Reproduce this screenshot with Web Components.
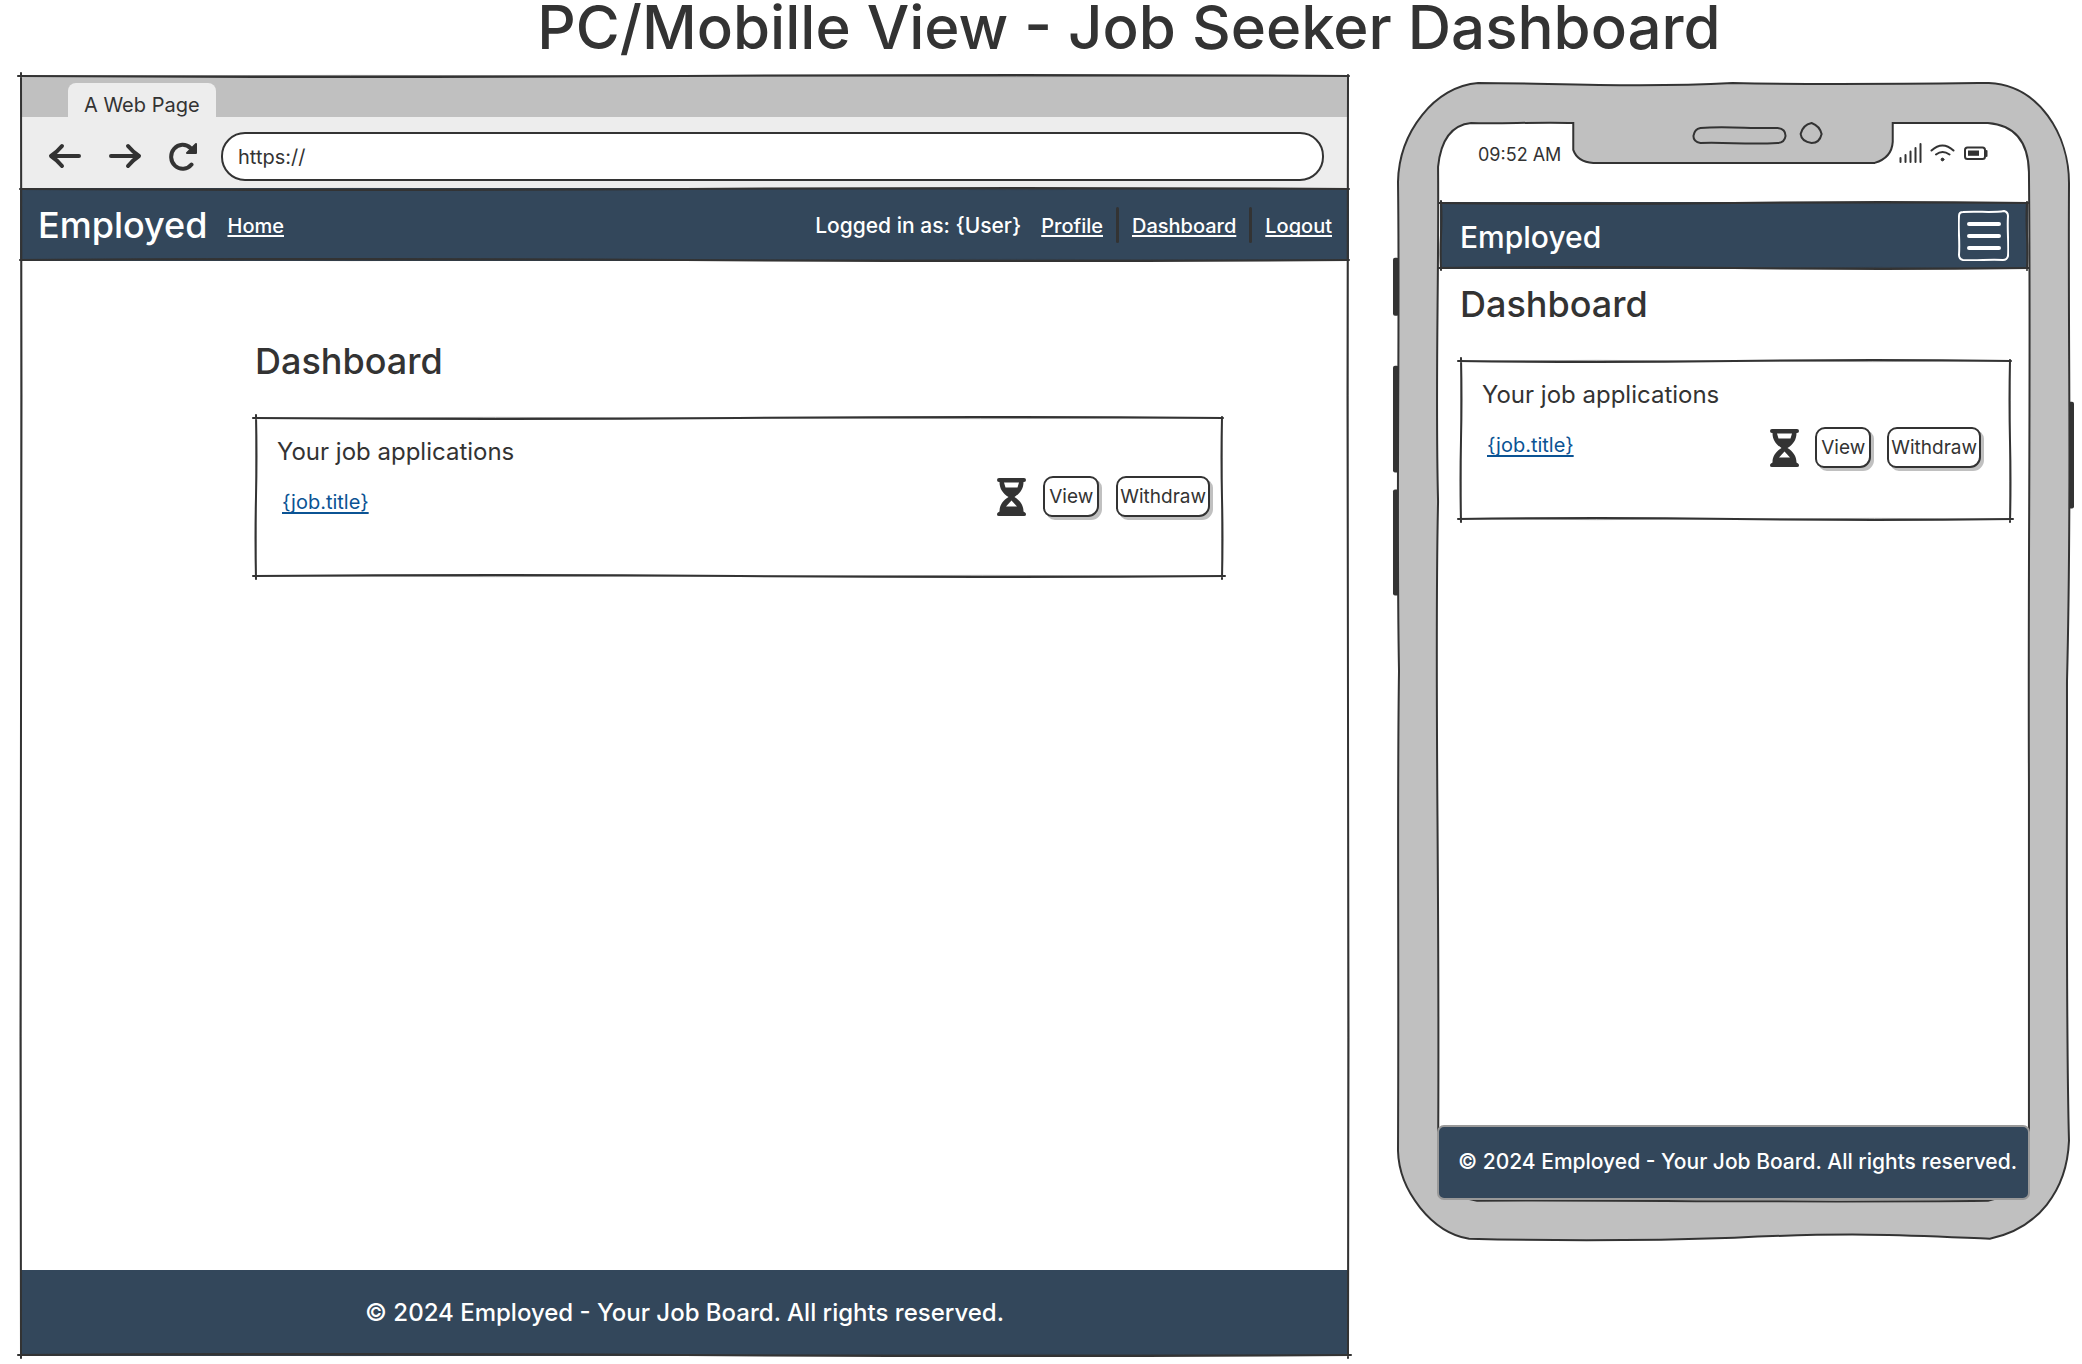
<!DOCTYPE html>
<html lang="en">
<head>
<meta charset="utf-8">
<meta name="viewport" content="width=device-width, initial-scale=1">
<title>PC/Mobille View - Job Seeker Dashboard</title>
<style>
  body {
    margin: 0;
    background: #fff;
    color: #333;
    font-family: Inter, "Open Sans", sans-serif;
    --ink: #333;
    --navy: #33475b;
    --metal: #c0c0c0;
    --link: #0b5394;
  }
</style>
</head>
<body>
<wireframe-board></wireframe-board>

<script>
function define(name, html, Base = HTMLElement) {
  const template = document.createElement('template');
  template.innerHTML = html;
  customElements.define(name, class extends Base {
    constructor() {
      super();
      this.attachShadow({ mode: 'open' }).append(template.content.cloneNode(true));
    }
  });
}

/* Hand-drawn outline laid over its parent; sides="trbl" picks the edges. */
class SketchOutline extends HTMLElement {
  constructor() {
    super();
    this.attachShadow({ mode: 'open' }).innerHTML = `
      <style>
        :host { position: absolute; inset: 0; display: block; pointer-events: none; color: var(--ink); }
        svg { display: block; width: 100%; height: 100%; overflow: visible; }
        path { fill: none; stroke: currentColor; stroke-width: 2; stroke-linecap: round; }
        path.ghost { stroke-width: 1; opacity: .5; }
      </style>
      <svg aria-hidden="true"><path class="ghost"/><path class="main"/></svg>`;
  }
  connectedCallback() {
    this.observer = new ResizeObserver(() => this.draw());
    this.observer.observe(this);
    this.draw();
  }
  disconnectedCallback() { this.observer.disconnect(); }
  draw() {
    const w = this.clientWidth, h = this.clientHeight;
    const sides = this.getAttribute('sides') || 'trbl';
    const over = Number(this.getAttribute('over') || 0);
    const line = (x1, y1, x2, y2, bend) => {
      const dx = (x2 - x1) / 4, dy = (y2 - y1) / 4;
      const nx = dy ? bend : 0, ny = dx ? bend : 0;
      return `M${x1} ${y1}Q${x1 + dx + nx} ${y1 + dy + ny} ${x1 + 2 * dx} ${y1 + 2 * dy}` +
             `T${x2} ${y2}`;
    };
    const build = k => [
      sides.includes('t') ? line(-over, 1, w, 1, 2 * k) : '',
      sides.includes('r') ? line(w - 1, 0, w - 1, h + over, -1 * k) : '',
      sides.includes('b') ? line(-over, h - 1, w + over, h - 1, -2 * k) : '',
      sides.includes('l') ? line(1, -over, 1, h + over, k) : ''
    ].join('');
    this.shadowRoot.querySelector('.main').setAttribute('d', build(1));
    this.shadowRoot.querySelector('.ghost').setAttribute('d', build(-0.6));
  }
}
customElements.define('sketch-outline', SketchOutline);

define('hour-glass', `
  <style>:host { display: block; width: 29px; height: 38px; } svg { display: block; width: 100%; height: 100%; }</style>
  <svg viewBox="0 0 29 38" role="img" aria-label="Pending">
    <path fill="#333" fill-rule="evenodd" d="M2 0H27Q29 0 29 2T27 4H26.500C26.500 11 23 15.500 17.500 19C23 22.500 26.500 27 26.500 33.500L28 34.500Q29 35 29 36.500T27 38H2Q0 38 0 36.500T1 34.500L2.500 33.500C2.500 27 6 22.500 11.500 19C6 15.500 2.500 11 2.500 4H2Q0 4 0 2T2 0ZM7 4.500L8.500 9.500H20.500L22 4.500ZM14.500 22.500L9 28.500H20Z"/>
  </svg>`);

define('sketch-button', `
  <style>
    :host { display: block; }
    button {
      display: block; height: 41px; min-width: 56px; padding: 0 2px; margin: 0;
      border: 2px solid var(--ink); border-radius: 10px 9px 11px 9px; background: #fff;
      box-shadow: 3px 3px 0 var(--metal); color: inherit;
      font: inherit; font-size: 19px; line-height: 24px; text-align: center;
    }
  </style>
  <button type="button"><slot></slot></button>`);

define('job-applications', `
  <style>
    :host { display: block; }
    h1 { margin: 0 0 34px; font-size: 36px; line-height: 44px; font-weight: 500; }
    section { position: relative; box-sizing: border-box; min-height: 160px; padding: 20px var(--card-end, 13px) 20px 22px; }
    h2 { margin: 0 0 9px; font-size: 24px; line-height: 30px; font-weight: 400; }
    .row { display: flex; align-items: flex-start; justify-content: space-between; padding-left: 5px; }
    .actions { display: flex; align-items: center; gap: var(--row-gap, 17px); padding-top: var(--actions-drop, 0); }
    a { padding-top: 14px; font-size: 20px; line-height: 24px; color: var(--link);
        text-decoration-thickness: 2px; text-underline-offset: 3px; text-decoration-skip-ink: none; }
  </style>
  <h1>Dashboard</h1>
  <section>
    <sketch-outline over="2"></sketch-outline>
    <h2>Your job applications</h2>
    <div class="row">
      <a href="#job">{job.title}</a>
      <div class="actions">
        <hour-glass></hour-glass>
        <sketch-button>View</sketch-button>
        <sketch-button>Withdraw</sketch-button>
      </div>
    </div>
  </section>`);

define('browser-chrome', `
  <style>
    :host { display: block; background: #ededed; }
    .tabs { display: flex; align-items: flex-end; height: 42px; padding: 0 48px; background: var(--metal); }
    .tab { padding: 10px 16px 0; border-radius: 8px 8px 0 0; background: #ededed; font-size: 20px; line-height: 24px; }
    .bar { display: flex; align-items: center; gap: 24px; box-sizing: border-box; height: 71px; padding: 7px 25px 0 27px; }
    .tools { display: flex; align-items: center; gap: 26px; }
    button { display: block; padding: 0; border: 0; background: none; }
    svg { display: block; fill: none; stroke: #333; stroke-width: 4; stroke-linecap: round; stroke-linejoin: round; }
    label { flex: 1; display: block; }
    input { display: block; box-sizing: border-box; width: 100%; height: 49px; padding: 2px 15px 0; border: 2px solid var(--ink);
            border-radius: 24px; background: #fff; color: inherit; font: inherit; font-size: 20px; }
  </style>
  <div class="tabs"><div class="tab">A Web Page</div></div>
  <div class="bar">
    <div class="tools">
      <button type="button" aria-label="Back"><svg width="35" height="28" viewBox="0 0 35 28"><path d="M32 14H4M15 4Q10 10 4 14Q10 18 15 24"/></svg></button>
      <button type="button" aria-label="Forward"><svg width="35" height="28" viewBox="0 0 35 28"><path d="M3 14H31M20 4Q25 10 31 14Q25 18 20 24"/></svg></button>
      <button type="button" aria-label="Reload"><svg width="28" height="29" viewBox="1 0 28 29"><path d="M23.500 22.500A11.500 12 0 1 1 22.500 6"/><path fill="#333" stroke-width="2" d="M28 2V11H19Z"/></svg></button>
    </div>
    <label><input type="text" value="https://" aria-label="Address"></label>
  </div>`);

define('browser-frame', `
  <style>
    :host { position: relative; display: flex; flex-direction: column; }
    nav { position: relative; display: flex; align-items: center; min-height: 73px; box-sizing: border-box; padding: 0 17px 0 18px; background: var(--navy);
          color: #fff; font-size: 20px; line-height: 24px; font-weight: 500; }
    .brand { margin-right: 20px; font-size: 36px; line-height: 44px; }
    .user { margin: 0 20px 0 auto; font-size: 21px; }
    .user, nav a { padding-top: 2px; }
    nav a { color: inherit; text-decoration-thickness: 2px; text-underline-offset: 2px; text-decoration-skip-ink: none; }
    .rule { width: 3px; height: 36px; margin: 0 13px; border-radius: 2px; background: var(--ink); }
    main { flex: 1; padding: 78px 126px 40px 235px; }
    footer { position: relative; display: flex; align-items: center; justify-content: center; height: 86px; background: var(--navy);
             color: #fff; font-size: 24px; line-height: 30px; font-weight: 500; }
  </style>
  <browser-chrome></browser-chrome>
  <nav>
    <span class="brand">Employed</span>
    <a href="#home">Home</a>
    <span class="user">Logged in as: {User}</span>
    <a href="#profile">Profile</a><span class="rule"></span>
    <a href="#dashboard">Dashboard</a><span class="rule"></span>
    <a href="#logout">Logout</a>
    <sketch-outline sides="tb"></sketch-outline>
  </nav>
  <main><job-applications></job-applications></main>
  <footer>© 2024 Employed - Your Job Board. All rights reserved.</footer>
  <sketch-outline over="2"></sketch-outline>`);

define('status-icons', `
  <style>:host { display: flex; align-items: center; gap: 8px; } svg { display: block; fill: none; stroke: #333; stroke-width: 2; stroke-linecap: round; stroke-linejoin: round; }</style>
  <svg width="23" height="20" viewBox="0 0 23 20" role="img" aria-label="Signal"><path d="M1.500 15V19M6.500 12V19M11.500 8.500V19M16.500 5V19M21.500 1V19"/></svg>
  <svg width="25" height="18" viewBox="0 0 25 18" role="img" aria-label="Wi-Fi"><path d="M1.500 6.500Q12.500-3.500 23.500 6.500M6 10.500Q12.500 5.500 19.500 10.500"/><circle cx="12.500" cy="15.500" r="1.400" fill="#333" stroke-width="1"/></svg>
  <svg width="25" height="15" viewBox="0 0 25 15" role="img" aria-label="Battery"><rect x="2" y="1.500" width="20" height="11.500" rx="2.500"/><path d="M23.500 5V10"/><path fill="#333" stroke="none" d="M5 4.500H16V9.800H5Z"/></svg>`);

define('phone-frame', `
  <style>
    :host { position: relative; display: block; box-sizing: border-box; aspect-ratio: 672 / 1156; padding: 40px 40px 40px 40px;
            --card-end: 30px; --row-gap: 16px; --actions-drop: 8px; }
    .shell { position: absolute; inset: 0; width: 100%; height: 100%; overflow: visible; }
    .screen { position: relative; display: flex; flex-direction: column; height: 100%; }
    .status { display: flex; justify-content: space-between; align-items: flex-start; box-sizing: border-box; height: 80px; padding: 21px 42px 0 41px;
              font-size: 18px; line-height: 24px; }
    nav { position: relative; display: flex; align-items: center; justify-content: space-between; box-sizing: border-box; height: 67px; margin: 0 2px 0 3px; padding: 0 19px 0 20px;
          background: var(--navy); color: #fff; font-size: 30px; line-height: 36px; font-weight: 500; }
    nav button { display: block; padding: 0; border: 0; background: none; }
    nav svg { display: block; }
    .brand { padding-top: 2px; }
    main { flex: 1; padding: 13px 19px 0 23px; }
    footer { display: flex; align-items: center; justify-content: center; box-sizing: border-box; height: 75px; padding-left: 8px; border: 2px solid #999; border-radius: 7px; background: var(--navy);
             color: #fff; font-size: 21px; line-height: 26px; font-weight: 500; white-space: nowrap; }
  </style>
  <svg class="shell" viewBox="0 0 672 1159" preserveAspectRatio="none" aria-hidden="true">
    <g fill="#333"><rect x="-4" y="176" width="6" height="58" rx="2"/><rect x="-4" y="284" width="6" height="107" rx="2"/><rect x="-4" y="408" width="6" height="106" rx="2"/><rect x="670" y="320" width="6" height="107" rx="2"/></g>
    <g stroke="#333" stroke-width="2">
      <path fill="#c0c0c0" d="M81 1C150 1 240 6 335 1C420 3 500 2 591 1C640 3 672 52 671 104C670 300 674 400 669 600C669 800 668 950 671 1060C669 1110 640 1148 592 1158C520 1155 460 1151 337 1157C250 1160 150 1160 72 1158C35 1152 2 1110 1 1070C2 850 0 730 2 590C-1 420 3 250 1 100C2 50 38 4 81 1Z"/>
      <path fill="#fff" d="M74 41C100 42 140 40 176 41V68Q180 80 196 81H477Q494 76 495 60V41H590Q630 44 631 90C633 300 630 480 631 700V1080Q628 1112 590 1120C400 1122 200 1119 80 1120Q43 1114 41 1080C43 800 37 600 41 420C38 300 42 200 41 85Q45 44 74 41Z"/>
      <path fill="none" d="M303 46C330 44 355 47 380 46Q388 47 388 54Q387 61 380 61C350 63 330 60 303 61Q296 60 296 54Q297 47 303 46Z"/>
      <path fill="none" d="M414 41Q422 44 424 52Q422 61 414 61Q404 60 403 52Q405 43 414 41Z"/>
    </g>
  </svg>
  <div class="screen">
    <div class="status"><span>09:52 AM</span><status-icons></status-icons></div>
    <nav>
      <span class="brand">Employed</span>
      <button type="button" aria-label="Menu"><svg width="51" height="51" viewBox="0 0 51 51" fill="none" stroke="#fff" stroke-linecap="round"><path stroke-width="2" d="M5 2C20 1 35 3 46 1Q50 2 50 6C49 20 51 35 50 46Q49 50 45 50C30 49 20 51 5 50Q1 49 1 45C2 30 0 20 1 6Q1 2 5 2Z"/><path stroke-width="4" d="M11 14H41M11 26H41M11 38H41"/></svg></button>
      <sketch-outline over="1"></sketch-outline>
    </nav>
    <main><job-applications></job-applications></main>
    <footer>© 2024 Employed - Your Job Board. All rights reserved.</footer>
  </div>`);

define('wireframe-board', `
  <style>
    :host { display: flex; flex-direction: column; box-sizing: border-box; min-height: 100vh; padding: 0 12px 8px 20px; }
    .title { margin: 0; padding: 0 0 20px 168px; font-size: 60px; line-height: 55px; font-weight: 500; text-align: center; white-space: nowrap; }
    .views { flex: 1; display: grid; grid-template-columns: minmax(0, 1329fr) minmax(0, 673fr); column-gap: 48px; }
    phone-frame { align-self: start; margin-top: 7px; }
  </style>
  <div class="title" role="heading" aria-level="1">PC/Mobille View - Job Seeker Dashboard</div>
  <div class="views">
    <browser-frame></browser-frame>
    <phone-frame></phone-frame>
  </div>`);
</script>
</body>
</html>
